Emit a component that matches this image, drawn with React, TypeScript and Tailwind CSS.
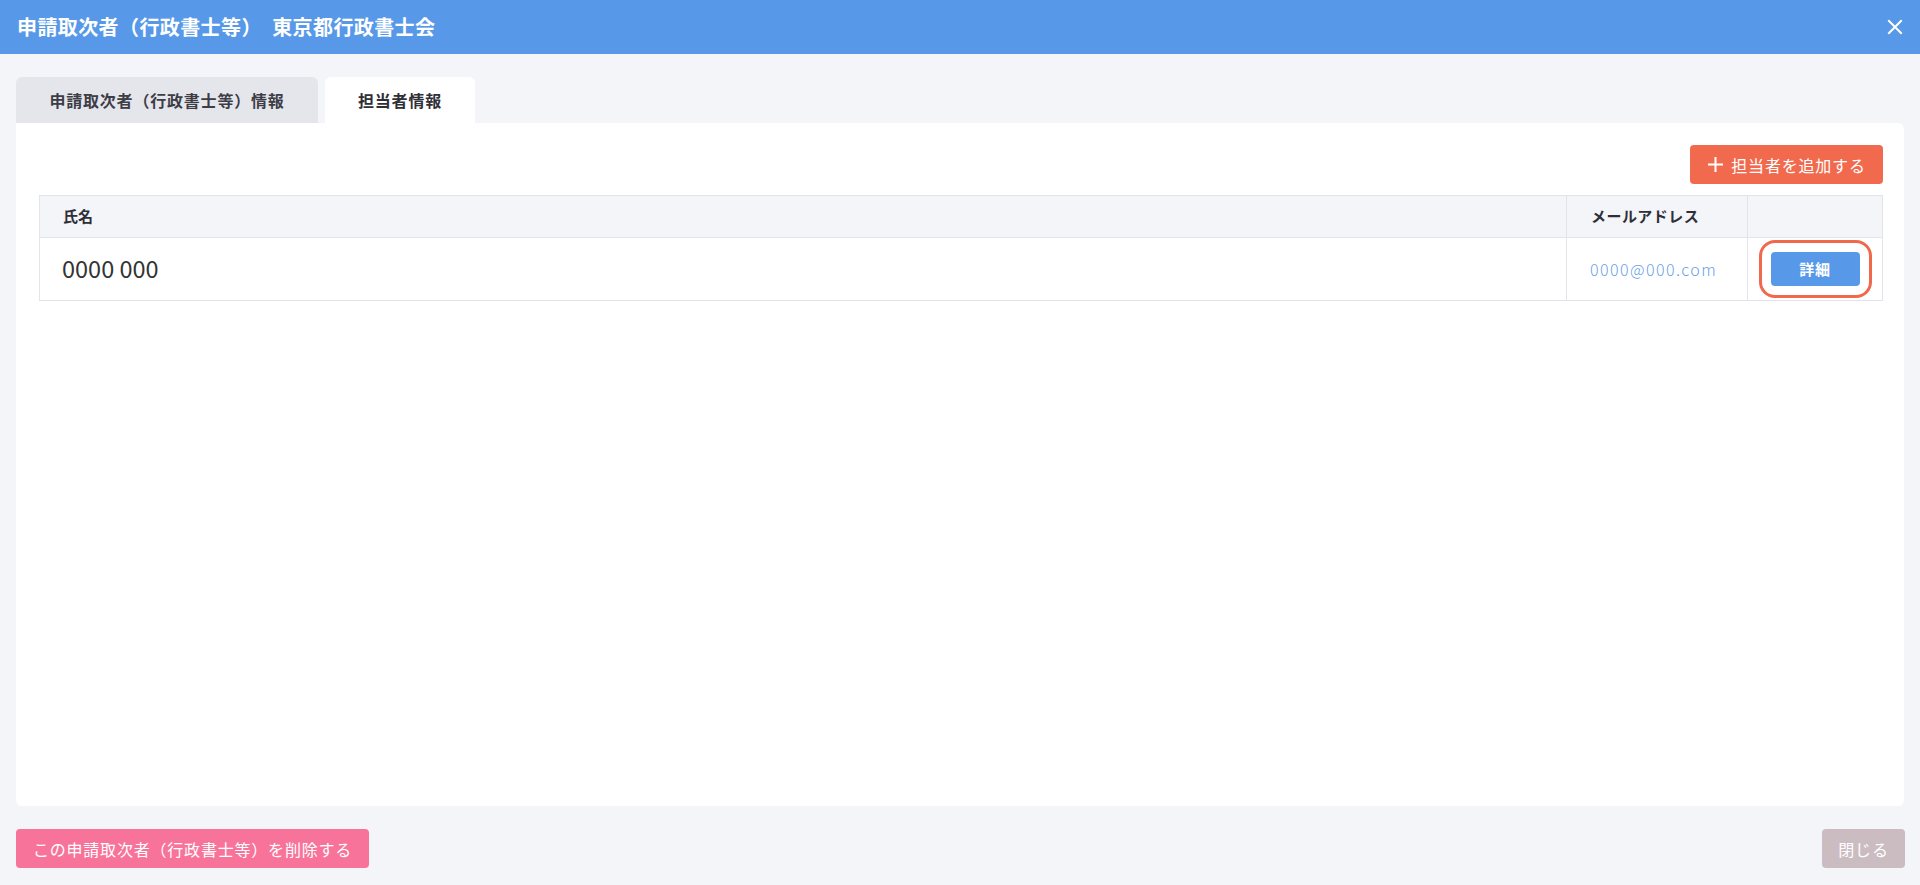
import React from "react";

const font = { fontFamily: '"Noto Sans CJK JP", "Noto Sans", sans-serif' };

export default function App() {
  return (
    <div
      className="w-full h-[885px] bg-[#f4f5f9] flex flex-col text-[#333]"
      style={font}
    >
      <header className="h-[54px] shrink-0 bg-[#5799e8] flex items-center justify-between pl-[17px] pr-[17px]">
        <h1 className="text-white text-[20px] font-bold tracking-[0.02em]">
          申請取次者（行政書士等）　東京都行政書士会
        </h1>
        <button className="text-white">
          <svg width="16" height="16" viewBox="0 0 16 16" fill="none" stroke="white" strokeWidth="2" strokeLinecap="square">
            <path d="M2 2L14 14M14 2L2 14" />
          </svg>
        </button>
      </header>

      <main className="flex-1 flex flex-col px-4 pt-[23px] min-h-0">
        <div className="flex gap-[7px] items-end">
          <div className="w-[302px] h-[46px] rounded-t-[6px] bg-[#e5e6eb] flex items-center justify-center text-[16px] font-bold text-[#3d3d47] tracking-[0.05em]">
            申請取次者（行政書士等）情報
          </div>
          <div className="w-[150px] h-[46px] rounded-t-[6px] bg-white flex items-center justify-center text-[16px] font-bold text-[#2f2f38] tracking-[0.05em]">
            担当者情報
          </div>
        </div>
        <section className="flex-1 bg-white rounded-b-[6px] rounded-tr-[6px] pl-[23px] pr-[21px] pt-[22px] flex flex-col">
          <div className="flex justify-end">
            <button className="h-[39px] w-[193px] rounded-[4px] bg-[#f26a4d] text-white flex items-center justify-center gap-[7px] text-[16px] tracking-[0.05em]">
              <svg width="17" height="17" viewBox="0 0 17 17" stroke="white" strokeWidth="2" fill="none">
                <path d="M8.5 1V16M1 8.5H16" />
              </svg>
              担当者を追加する
            </button>
          </div>
          <div className="mt-[11px] border border-[#e3e4ea]">
            <div className="h-[42px] bg-[#f4f5f9] border-b border-[#e3e4ea] flex text-[15px] font-bold text-[#2f2f38]">
              <div className="flex-1 flex items-center pl-[23px]">氏名</div>
              <div className="w-[181px] border-l border-[#e3e4ea] flex items-center pl-[24px] tracking-[0.03em]">
                メールアドレス
              </div>
              <div className="w-[135px] border-l border-[#e3e4ea]"></div>
            </div>
            <div className="h-[62px] flex">
              <div className="flex-1 flex items-center pl-[22px] text-[23.5px] text-[#333]">
                0000 000
              </div>
              <div className="w-[181px] border-l border-[#e3e4ea] flex items-center pl-[23px] text-[16px] font-light text-[#6a9fe6] tracking-[0.09em]">
                0000@000.com
              </div>
              <div className="w-[135px] border-l border-[#e3e4ea] flex items-center justify-center">
                <button className="w-[89px] h-[34px] rounded-[4px] bg-[#5799e8] text-white text-[15px] font-bold tracking-[0.05em] outline-[3px] outline-solid outline-[#f0694c] outline-offset-[9px]">
                  詳細
                </button>
              </div>
            </div>
          </div>
        </section>
      </main>

      <footer className="shrink-0 flex justify-between items-center pl-4 pr-[15px] mt-[23px] mb-[17px]">
        <button className="h-[39px] w-[353px] rounded-[4px] bg-[#f8739a] text-white text-[16px] tracking-[0.05em]">
          この申請取次者（行政書士等）を削除する
        </button>
        <button className="h-[39px] w-[83px] rounded-[4px] bg-[#cbbcc2] text-white text-[16px] tracking-[0.05em]">
          閉じる
        </button>
      </footer>
    </div>
  );
}
